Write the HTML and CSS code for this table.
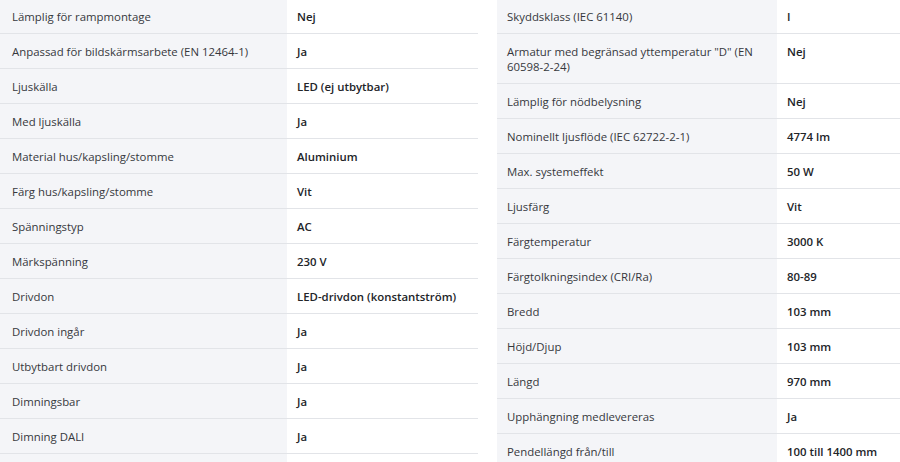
FILE: index.html
```html
<!DOCTYPE html>
<html lang="sv">
<head>
    <meta charset="UTF-8">
    <meta name="viewport" content="width=device-width, initial-scale=1.0">
    <title>Tekniska data</title>
    <link rel="stylesheet" href="styles.css">
</head>
<body>
    <div class="specs">
        <table class="spec-table left">
            <colgroup>
                <col class="col-label">
                <col class="col-value">
            </colgroup>
            <tr><td class="label">Lämplig för rampmontage</td><td class="value">Nej</td></tr>
            <tr><td class="label">Anpassad för bildskärmsarbete (EN 12464-1)</td><td class="value">Ja</td></tr>
            <tr><td class="label">Ljuskälla</td><td class="value">LED (ej utbytbar)</td></tr>
            <tr><td class="label">Med ljuskälla</td><td class="value">Ja</td></tr>
            <tr><td class="label">Material hus/kapsling/stomme</td><td class="value">Aluminium</td></tr>
            <tr><td class="label">Färg hus/kapsling/stomme</td><td class="value">Vit</td></tr>
            <tr><td class="label">Spänningstyp</td><td class="value">AC</td></tr>
            <tr><td class="label">Märkspänning</td><td class="value">230 V</td></tr>
            <tr><td class="label">Drivdon</td><td class="value">LED-drivdon (konstantström)</td></tr>
            <tr><td class="label">Drivdon ingår</td><td class="value">Ja</td></tr>
            <tr><td class="label">Utbytbart drivdon</td><td class="value">Ja</td></tr>
            <tr><td class="label">Dimningsbar</td><td class="value">Ja</td></tr>
            <tr><td class="label">Dimning DALI</td><td class="value">Ja</td></tr>
            <tr class="cut"><td class="label"></td><td class="value"></td></tr>
        </table>

        <table class="spec-table right">
            <colgroup>
                <col class="col-label">
                <col class="col-value">
            </colgroup>
            <tr><td class="label">Skyddsklass (IEC 61140)</td><td class="value">I</td></tr>
            <tr><td class="label">Armatur med begränsad yttemperatur "D" (EN 60598-2-24)</td><td class="value">Nej</td></tr>
            <tr><td class="label">Lämplig för nödbelysning</td><td class="value">Nej</td></tr>
            <tr><td class="label">Nominellt ljusflöde (IEC 62722-2-1)</td><td class="value">4774 lm</td></tr>
            <tr><td class="label">Max. systemeffekt</td><td class="value">50 W</td></tr>
            <tr><td class="label">Ljusfärg</td><td class="value">Vit</td></tr>
            <tr><td class="label">Färgtemperatur</td><td class="value">3000 K</td></tr>
            <tr><td class="label">Färgtolkningsindex (CRI/Ra)</td><td class="value">80-89</td></tr>
            <tr><td class="label">Bredd</td><td class="value">103 mm</td></tr>
            <tr><td class="label">Höjd/Djup</td><td class="value">103 mm</td></tr>
            <tr><td class="label">Längd</td><td class="value">970 mm</td></tr>
            <tr><td class="label">Upphängning medlevereras</td><td class="value">Ja</td></tr>
            <tr><td class="label">Pendellängd från/till</td><td class="value">100 till 1400 mm</td></tr>
        </table>
    </div>
</body>
</html>
```

FILE: styles.css
```css
body {
    margin: 0;
    background: white;
    font-family: "Open Sans", "Noto Sans", sans-serif;
    font-size: 11.4px;
    color: #36383d;
    overflow: hidden;
}

.specs {
    display: flex;
    align-items: flex-start;
    gap: 19px;
    width: 940px;
    margin-top: -1px;
}

.spec-table {
    border-collapse: collapse;
    table-layout: fixed;
    flex: none;
}

.spec-table.left {
    width: 478px;
}

.spec-table.right {
    width: 440px;
}

.left .col-label {
    width: 287px;
}

.right .col-label {
    width: 280px;
}

.spec-table td {
    padding: 10px 10px 9px;
    line-height: 15px;
    height: 15px;
    vertical-align: top;
    border-bottom: 1px solid #e2e4e8;
}

.spec-table .label {
    background: #f4f5f8;
}

.left .label {
    padding-left: 12px;
}

.spec-table .value {
    font-weight: 600;
    color: #222428;
}
```
